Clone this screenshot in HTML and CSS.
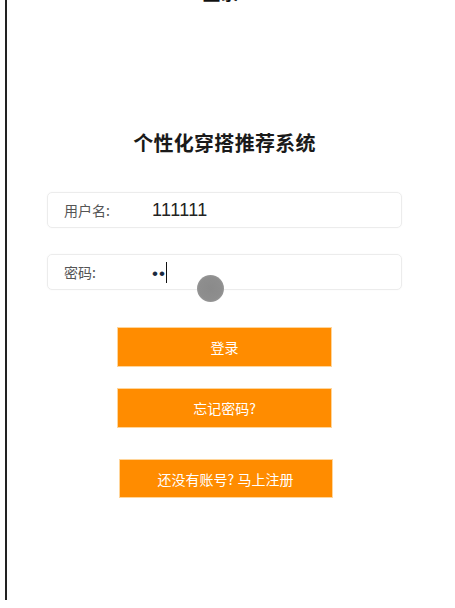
FILE: index.html
```html
<!DOCTYPE html>
<html lang="zh">
<head>
<meta charset="utf-8">
<title>登录</title>
<link rel="stylesheet" href="styles.css">
</head>
<body>
<div class="page">
  <div class="topbar">登录</div>
  <main class="login">
    <h1 class="title">个性化穿搭推荐系统</h1>
    <div class="field">
      <span class="label">用户名:</span>
      <span class="value">111111</span>
    </div>
    <div class="field field-pwd">
      <span class="label">密码:</span>
      <span class="dots">••</span><span class="caret"></span>
      <span class="touch"></span>
    </div>
    <button class="btn btn-login">登录</button>
    <button class="btn btn-forgot">忘记密码?</button>
    <button class="btn btn-register">还没有账号? 马上注册</button>
  </main>
</div>
</body>
</html>
```

FILE: styles.css
```css
html, body {
  margin: 0;
  padding: 0;
  background: #fff;
}
body {
  font-family: "Noto Sans CJK SC", "Liberation Sans", sans-serif;
  color: #333;
}
.page {
  margin-left: 5px;
  width: 435px;
  height: 600px;
  border-left: 2px solid #222;
  overflow: hidden;
}
.topbar {
  text-align: center;
  font-size: 18px;
  font-weight: bold;
  line-height: 20px;
  margin-top: -18px;
  height: 20px;
  color: #111;
  padding-right: 8px;
}
.login {
  display: flex;
  flex-direction: column;
  align-items: center;
  padding-top: 127px;
}
.title {
  margin: 0;
  font-size: 20px;
  line-height: 28px;
  font-weight: bold;
  color: #1a1a1a;
  letter-spacing: 0.3px;
}
.field {
  position: relative;
  box-sizing: border-box;
  width: 355px;
  height: 36px;
  margin-top: 35px;
  border: 1px solid #ececec;
  border-radius: 5px;
  box-shadow: 0 0 2px rgba(0,0,0,0.04);
  display: flex;
  align-items: center;
  padding-left: 16px;
}
.field-pwd {
  margin-top: 26px;
}
.label {
  width: 88px;
  font-size: 14px;
  color: #555;
}
.value {
  font-family: "Liberation Sans", sans-serif;
  font-size: 18px;
  color: #222;
  letter-spacing: 0.4px;
}
.dots {
  font-family: "Liberation Sans", sans-serif;
  font-size: 17px;
  color: #1a2a40;
  letter-spacing: 1px;
  margin-top: 3px;
}
.caret {
  width: 1px;
  height: 21px;
  background: #111;
  margin-left: 0;
}
.touch {
  position: absolute;
  left: 149px;
  top: 20px;
  width: 27px;
  height: 27px;
  border-radius: 50%;
  background: radial-gradient(circle, #8a8a8a 0%, #8e8e8e 60%, #b0b0b0 100%);
}
.btn {
  box-sizing: border-box;
  width: 215px;
  height: 40px;
  border: 1px solid #ffd59a;
  background: #ff8c00;
  color: #fff;
  font-family: "Noto Sans CJK SC", "Liberation Sans", sans-serif;
  font-size: 14px;
  padding: 0;
  cursor: pointer;
}
.btn-login {
  margin-top: 37px;
}
.btn-forgot {
  margin-top: 21px;
}
.btn-register {
  margin-top: 31px;
  height: 39px;
  transform: translateX(1px);
  width: 214px;
}
```
